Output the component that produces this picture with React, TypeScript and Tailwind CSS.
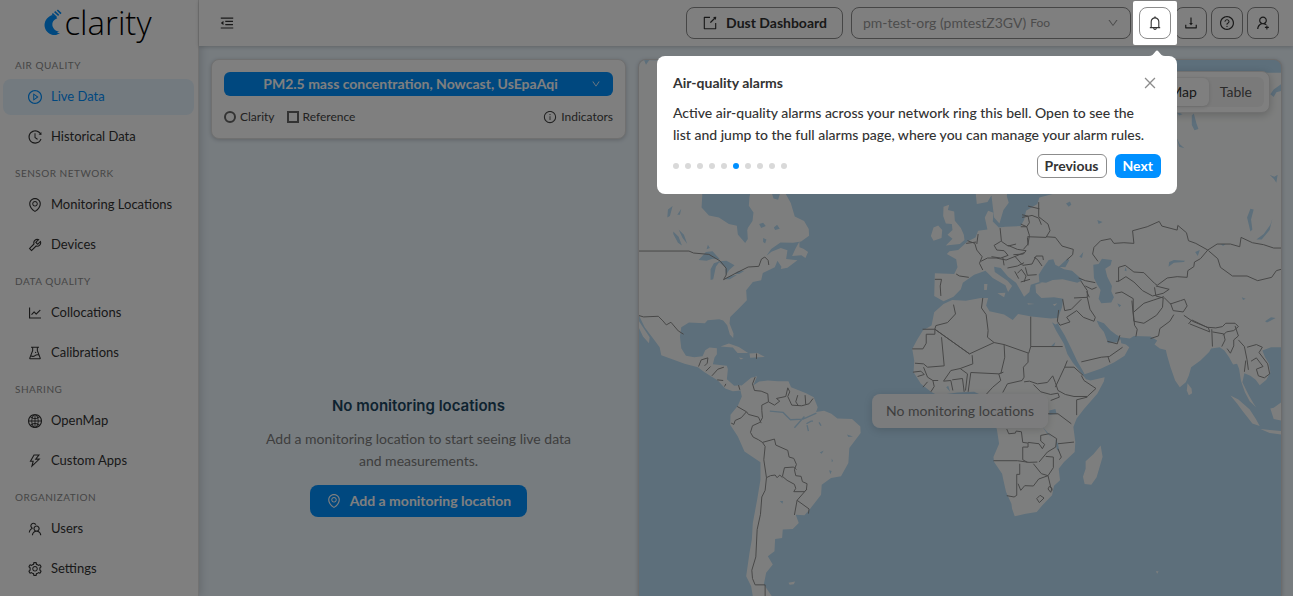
import type { ComponentType, ReactNode } from "react";
import {
  AiOutlineBell,
  AiOutlineClose,
  AiOutlineDown,
  AiOutlineDownload,
  AiOutlineEnvironment,
  AiOutlineExperiment,
  AiOutlineExport,
  AiOutlineGlobal,
  AiOutlineHistory,
  AiOutlineInfoCircle,
  AiOutlineLineChart,
  AiOutlineMenuFold,
  AiOutlinePlayCircle,
  AiOutlineQuestionCircle,
  AiOutlineSetting,
  AiOutlineTeam,
  AiOutlineThunderbolt,
  AiOutlineTool,
  AiOutlineUserAdd,
} from "react-icons/ai";
import { clsx } from "clsx";

interface NavItem {
  label: string;
  icon: ComponentType<{ className?: string }>;
  active?: boolean;
}

interface NavGroup {
  title: string;
  items: NavItem[];
}

const navGroups: NavGroup[] = [
  {
    title: "AIR QUALITY",
    items: [
      { label: "Live Data", icon: AiOutlinePlayCircle, active: true },
      { label: "Historical Data", icon: AiOutlineHistory },
    ],
  },
  {
    title: "SENSOR NETWORK",
    items: [
      { label: "Monitoring Locations", icon: AiOutlineEnvironment },
      { label: "Devices", icon: AiOutlineTool },
    ],
  },
  {
    title: "DATA QUALITY",
    items: [
      { label: "Collocations", icon: AiOutlineLineChart },
      { label: "Calibrations", icon: AiOutlineExperiment },
    ],
  },
  {
    title: "SHARING",
    items: [
      { label: "OpenMap", icon: AiOutlineGlobal },
      { label: "Custom Apps", icon: AiOutlineThunderbolt },
    ],
  },
  {
    title: "ORGANIZATION",
    items: [
      { label: "Users", icon: AiOutlineTeam },
      { label: "Settings", icon: AiOutlineSetting },
    ],
  },
];

const TOUR_STEPS = 10;
const TOUR_CURRENT = 5;

function Logo() {
  return (
    <a aria-label="clarity" className="flex h-[51px] items-start justify-center pr-0.5" href="#">
      <svg className="mt-2 h-7 w-[18px]" viewBox="25 26 54 84">
        <path
          d="M49 47C32 54 25 68 27 82c3 16 18 27 34 25l12-5-9-2 6-4c-10 1-18-8-20-18-1-9 4-17 15-21l-7-8z"
          fill="#0090ff"
        />
        <path d="M50 43l12 11M57 37l12 11M65 32l11 11" stroke="#0090ff" strokeWidth="5" />
      </svg>
      <span className="ml-0.5 font-['Open_Sans'] text-[33px] leading-[46px] font-light text-black">clarity</span>
    </a>
  );
}

function Sidebar() {
  return (
    <aside className="relative z-10 w-[199px] shrink-0 border-r border-[#e5e5e5] bg-white shadow-[2px_0_8px_rgba(0,0,0,0.15)]">
      <Logo />
      <nav>
        {navGroups.map((group) => (
          <section key={group.title}>
            <h2 className="flex h-7 items-center pl-[15px] text-[10px] tracking-wider text-[#8c8c8c]">
              {group.title}
            </h2>
            <ul>
              {group.items.map(({ label, icon: Icon, active }) => (
                <li className="mr-1 mb-1 ml-[3px]" key={label}>
                  <a
                    className={clsx(
                      "flex h-9 items-center gap-2 rounded-lg pl-6 text-[13px]",
                      active ? "bg-[#e6f4ff] text-[#0090ff]" : "text-[#333]",
                    )}
                    href="#"
                  >
                    <Icon className="h-4 w-4" />
                    {label}
                  </a>
                </li>
              ))}
            </ul>
          </section>
        ))}
      </nav>
    </aside>
  );
}

function IconButton({ label, children }: { label: string; children: ReactNode }) {
  return (
    <button
      aria-label={label}
      className="flex h-8 w-8 items-center justify-center rounded-lg border border-[#8c8c8c] bg-white text-base text-[#333]"
      type="button"
    >
      {children}
    </button>
  );
}

function AlarmTour() {
  return (
    <div
      aria-labelledby="tour-title"
      className="absolute top-[49px] -right-1.5 w-[520px] rounded-lg bg-white p-4 text-[#333]"
      role="dialog"
    >
      <svg className="absolute -top-1.5 right-3 h-1.5 w-4" viewBox="0 0 16 6">
        <path d="M0 6C3 6 4 4.500 6.500 1.500Q8-.5 9.500 1.500C12 4.500 13 6 16 6z" fill="#fff" />
      </svg>
      <div className="flex items-center justify-between">
        <h2 className="text-sm leading-[22px] font-bold" id="tour-title">
          Air-quality alarms
        </h2>
        <button aria-label="Close" className="flex h-[22px] w-[22px] items-center justify-center" type="button">
          <AiOutlineClose className="h-4 w-4 text-[#8c8c8c]" />
        </button>
      </div>
      <p className="mt-2 text-sm leading-[22px] font-medium">
        Active air-quality alarms across your network ring this bell. Open to see the
        <br />
        list and jump to the full alarms page, where you can manage your alarm rules.
      </p>
      <div className="mt-2 flex items-center justify-between">
        <div className="flex gap-1.5">
          {Array.from({ length: TOUR_STEPS }, (_, step) => (
            <span
              className={clsx("h-1.5 w-1.5 rounded-full", step === TOUR_CURRENT ? "bg-[#0090ff]" : "bg-[#d9d9d9]")}
              key={step}
            />
          ))}
        </div>
        <div className="flex gap-2 text-sm font-bold">
          <button className="h-6 rounded-md border border-[#8c8c8c] px-[7px] leading-[22px]" type="button">
            Previous
          </button>
          <button className="h-6 rounded-md bg-[#0090ff] px-2 leading-6 text-white" type="button">
            Next
          </button>
        </div>
      </div>
    </div>
  );
}

function Header() {
  return (
    <header className="flex h-[46px] items-center justify-between bg-white pr-[14px] pl-5 shadow-[0_1px_4px_rgba(0,0,0,0.2)]">
      <button aria-label="Collapse menu" className="text-[#333]" type="button">
        <AiOutlineMenuFold className="h-4 w-4" />
      </button>
      <div className="flex gap-2">
        <button
          className="flex h-8 items-center gap-2 rounded-lg border border-[#8c8c8c] px-[15px] text-sm font-bold text-[#333]"
          type="button"
        >
          <AiOutlineExport className="h-4 w-4" />
          Dust Dashboard
        </button>
        <label className="flex h-8 w-[280px] items-center rounded-lg border border-[#8c8c8c] px-[11px] text-[#999]">
          <select
            aria-label="Organization"
            className="appearance-none bg-transparent text-sm [field-sizing:content]"
            defaultValue="pm"
          >
            <option value="pm">pm-test-org (pmtestZ3GV)</option>
          </select>
          <span className="ml-1 text-xs">Foo</span>
          <AiOutlineDown className="ml-auto h-3 w-3" />
        </label>
        <div className="flex gap-1">
          <div className="relative z-30">
            <div className="pointer-events-none absolute -inset-1.5 rounded-xs bg-white shadow-[0_0_0_4000px_rgba(0,0,0,0.5)]" />
            <div className="relative">
              <IconButton label="Alarms">
                <AiOutlineBell />
              </IconButton>
            </div>
            <AlarmTour />
          </div>
          <IconButton label="Downloads">
            <AiOutlineDownload />
          </IconButton>
          <IconButton label="Help">
            <AiOutlineQuestionCircle />
          </IconButton>
          <IconButton label="Account">
            <AiOutlineUserAdd />
          </IconButton>
        </div>
      </div>
    </header>
  );
}

function FilterCard() {
  return (
    <div className="rounded-lg border border-[#e0e0e0] bg-white p-3 shadow-[0_1px_4px_rgba(0,0,0,0.2)]">
      <div className="grid items-center">
        <select
          aria-label="Measurement"
          className="col-start-1 row-start-1 h-6 w-full appearance-none rounded-md bg-[#0090ff] pr-7 pl-3 text-sm leading-6 font-bold text-white [text-align-last:center]"
          defaultValue="pm25"
        >
          <option value="pm25">PM2.5 mass concentration, Nowcast, UsEpaAqi</option>
        </select>
        <AiOutlineDown className="pointer-events-none col-start-1 row-start-1 mr-3 h-[10px] w-[10px] justify-self-end text-white" />
      </div>
      <div className="mt-3 flex items-center text-xs leading-[18px] text-[#444]">
        <span className="flex items-center gap-1">
          <span className="h-3 w-3 rounded-full border-2 border-[#666]" />
          Clarity
        </span>
        <span className="ml-3 flex items-center gap-1">
          <span className="h-3 w-3 border-2 border-[#666]" />
          Reference
        </span>
        <button className="ml-auto flex items-center gap-1" type="button">
          <AiOutlineInfoCircle className="h-[14px] w-[14px]" />
          Indicators
        </button>
      </div>
    </div>
  );
}

function EmptyState() {
  return (
    <div className="flex flex-col items-center px-12 pt-64 text-center">
      <h1 className="font-['Inter'] text-[15px] leading-[22px] font-semibold text-[#1d4661]">
        No monitoring locations
      </h1>
      <p className="mt-[11px] text-sm leading-[22px] text-[#7d7d7d]">
        Add a monitoring location to start seeing live data
        <br />
        and measurements.
      </p>
      <button
        className="mt-[13px] flex h-8 items-center gap-2 rounded-lg bg-[#0090ff] px-4 text-sm font-bold text-white"
        type="button"
      >
        <AiOutlineEnvironment className="h-4 w-4" />
        Add a monitoring location
      </button>
    </div>
  );
}

const landPaths = [
  // North and Central America
  "M3-393V375l17 35 30 40 15 20 5 24 70 26 40 10 20 15 40 25 22 24 23 8 23-2 3-16-22 2-22-20 3-30-3-10-42-5 5-20 7-10v-18l-22-2-13 8-8 18-25 3-25-4-14-23-4-35 4-28 23-14 48 2 8-9 35-3 12 4 12 14 8 28 10 10 1-13-12-30 2-20 26-25 24-25-2-30 20-25 25-5 5-22 36-17 8-20 12 18-2 7 20-4 30-22-34-4 4-26-20-7-28 11-15 12 14-20 28-20 38 1 24-4 24-17-1-20-14-24-28-14-12-40-22-40-10 10-6 20-14-4-10-34-52-20-10 50-2 26 14 20-3 26-16 24 2 30-8 12-22-26-3-26-24-5-30-20-30-6-22-24 2-34-5-405z",
  "M3 392l12 18 20 30-2 18-18-20-12-26z",
  // Newfoundland and the Caribbean
  "M485 152l-12 22-10 22 28-2 12 8 8-18-14-10-12-4z",
  "M248 468l25-9 30 10 28 18-32 0-14-16z",
  "M335 489l24-2 22 12-44 3zM303 501l14 2-8 4z",
  // South America
  "M308 600v-12l32-26 18-5-12 28 18-12 26-3 30 2 32 0 8 18 45 18 23 12 12 30-5 15 24-4 22 9 18 14 44 2 25 22 1 20-34 45-3 45-22 40-30 5-28 20-2 30-35 45-15 17-26-2 9 25-18 18-30 2-2 25-21 3-2 37-20 15 15 25-20 25-7 35 24 35h-57l-5-30-15-30 10-70 7-40 3-50 13-70 10-60v-52l-48-33-20-45-23-35 1-30 22-27 12-28z",
  // Britain, Ireland, Scandinavia
  "M918 48l17-6-4 16 19 4 2 28 18 22 9 20 2 16-14 12-42 4 20-20-15-12 15-14-2-18-18-2-8-22z",
  "M902 104l12 14-2 24-24 8-8-14 8-26z",
  "M1012-20l6 60 32-6 12-20 8 66 16 18 12-40 16-22-6-20 12-76z",
  // Eurasia and Africa
  "M1250-355H1932V470L1902 470 1876 480 1884 500 1896 520 1900 545 1888 568 1868 584 1856 568 1840 556 1822 548 1816 575 1828 600 1836 616 1850 640 1857 650 1838 632 1824 606 1812 572 1806 535 1800 520 1788 522 1776 500 1762 480 1748 470 1722 474 1716 484 1690 510 1662 530 1655 555 1646 575 1628 590 1614 570 1600 530 1590 496 1586 478 1568 474 1552 462 1560 450 1540 438 1490 436 1478 444 1450 440 1436 432 1420 420 1400 398 1378 390 1386 408 1400 424 1408 446 1412 458 1440 455 1450 446 1452 458 1466 462 1476 470 1462 496 1430 516 1390 535 1342 551 1336 540 1320 512 1300 470 1282 434 1266 408 1262 398 1254 402 1244 395 1256 420 1280 460 1290 490 1306 516 1330 545 1346 566 1360 570 1402 560 1400 572 1380 610 1340 656 1318 684 1308 710 1314 755 1312 785 1280 815 1264 835 1268 870 1250 886 1244 915 1215 945 1198 965 1165 970 1132 978 1124 955 1122 940 1106 905 1098 870 1094 850 1070 815 1068 800 1085 760 1078 715 1062 690 1045 650 1046 620 1010 604 960 606 900 614 880 604 850 580 828 545 830 510 824 475 840 445 856 420 882 405 890 365 918 340 944 328 985 330 1030 322 1052 322 1046 345 1056 362 1100 372 1126 388 1142 370 1182 378 1240 384 1262 382 1274 350 1278 324 1250 320 1212 322 1196 306 1194 282 1214 276 1206 274 1180 282 1176 304 1160 318 1150 300 1136 276 1112 258 1090 232 1070 228 1072 244 1110 270 1124 286 1112 304 1104 284 1066 262 1044 240 1010 252 976 276 970 296 948 318 918 332 890 316 892 248 950 250 960 230 956 206 928 190 936 182 962 178 990 152 1014 140 1022 120 1050 116 1042 80 1052 60 1068 66 1066 92 1084 110 1104 108 1150 106 1160 88 1166 60 1200 40 1206 20 1246 10z",
  // Sicily, Sardinia, Crete, Cyprus
  "M1080 308l24-2-4 14zM1040 280l10 0-2 18-8 0zM1170 338l22 2-20 2zM1246 342l14-4-8 8z",
  // Islands of the Indian Ocean
  "M1390 765l6 34-18 62-16 22-20-2-5-22 8-24 0-22 24-22z",
  "M1651 578l12 16 2 14-10 6-6-14z",
  "M1780 615l24 12 34 30 18 28 12 22-22-8-30-38-16-22zM1870 716l22 2 40 4v10l-34-4z",
  "M1932 636l-22 16-10 2 10 32 22 4z",
  "M452 1178l20-4-4 8-12 2zM1556 1143l8 0-4 8z",
];

const waterPaths = [
  // Great Lakes and Canadian lakes
  "M182 208l22-24 20-2 22 24-22-2-18 6zM218 268l0-32 10-18 18-6-12 16-8 38zM240 212l26-2 24 14-16 14-10 16-2-24zM258 266l18-10 22-4-22 14zM288 250l12-8 20-2-16 10z",
  "M88 80l2-24 14-10-8 30zM118 72l12-18-4 18zM106 122l16 16 10 26-12-8-14-26zM122 116l16 16 10 28-14-18zM206 176l4-14 6 10zM364 100l12-4 8 10-14 6zM376 142l10 4-4 12-6-4zM408 110l10-8 8 12-14 4zM318 112l14 2-10 6z",
  // Black Sea, Caspian Sea, Aral Sea
  "M1206 274l-2-22 14-22 16-22 14-2 6 16 26 14 24 4 32 28-16 8-44-10-30 2-20 8zM1264 228l26-24 6 4-12 22z",
  "M1368 222l16-2 10-16 30 4-4 16-16 10 6 24 14 28-2 16 8 18-8 16-30 2-8-14 6-26-10-16-10-20z",
  "M1594 228l2-14 14-6 34 2-4 4-30 2zM1466 228l2 14-6-2z",
  "M1858 146l22-16 20-28 6-18-8 34-24 28zM1830 80l10-26 10 2-8 30 4 30-6 6zM1380 88l16 6-12 6zM1286 38l12-6 4 10-8 6zM1440 338l12 6-6 6zM1674 184l14-6-6 18zM1750 160l16 0-8 6zM1884 392l18-12 14 2-26 14zM1814 320l12 4-8 4zM1326 198l12-14-4 18z",
  // African lakes
  "M1236 660l18-4 4 14-22 4zM1216 710l20 22 8 10-16-14zM1254 746l8 14 4 26-8-10zM926 590l6-4 6 18zM1240 468l14-14-4 14z",
  // Northern Siberia and the Arctic inlets
  "M1668-342l12-30 8 2-4 26 4 12-10-4zM1616-240l20 10-10 4zM1618-160l10 20 14 12-16-4zM1664-226l6-6 8 30 6 16-12 4-8-16zM1900-290l10-14 22-16 0 20-14 4-8 14zM1898-48l14 6 10-6-4 24-8-12zM18-393l6 14 10-14z",
  // Brazilian reservoirs
  "M546 786l12-6-6 10zM574 840l8 2-4 10zM582 804l4 8-4 4zM426 932l10 0-2 8zM628 732l18 6-14 2z",
];

// Long thin rivers: the Amazon and its mouth
const riverPath = "M396 662l40 4 22 22 38-2 40-18M500 678l-30 34M506 700l14-8 6 0M508 704l4 18M544 696l6 10";

const borderPath = [
  "M3 181H153l14 6 46 4 34 20 18 22 0 20-8 14 34-18 40-20 32-2 8-22 10-6 10 10 2 14",
  "M3 375l14 4 44-2 14 14 10 12 14-8 22 26 16 10",
  "M182 528l8-20 20-6-2 16-8 8M204 542l14-14M222 556l18-20 18-6M238 568l18 2M260 588l4-8M302 584l4 14M356 489v16",
  // South America
  "M352 560L344 580 350 600 370 602 390 610 392 634 372 644 372 660 374 682 366 696 344 706 338 726 346 740 362 748 374 756 410 746 414 764 450 780 454 800 468 804 476 822 470 838 474 856 490 858 494 874 508 880 506 898 478 930",
  "M392 634L410 644 426 632 416 624 444 618 450 592 456 604 450 618 462 644 492 646 514 640 526 624M480 614L474 634 482 646M502 614L504 642M298 648L326 664 332 672 362 680 370 698M326 664L310 682 292 690 288 702 280 698",
  "M374 756L382 768 378 808 386 862 382 900 372 920 368 972 358 1018 354 1100 342 1140 344 1165 352 1184H382V1220M386 862L398 856 412 854 418 862 426 854 434 862M434 858L440 832 468 830 476 838M434 858L448 870 470 882 474 894 468 904 500 904 508 896M478 930L514 956 512 970M478 930L470 974",
  // Western and central Europe
  "M892 266h20l-4 20 2 30M956 250l10 6 28 4M990 150l22 8 6 20 16 20-8 20 10 20M986 158l30-4M1022 130l-4 30M1088 112l4 40 20 14 24-6M1090 152l-20 12 8 14 22 2 12 14-22 8-28-4M1150 108l18 0 8 26-4 26-14 16M1030 212l20-10 26 0 30 6 30-12 24-10M1112 164l28 12 26 4-8 10-30 2M1096 200l4 24M1132 196l24 28 28-4 12-24 20 0 2 12M1110 232l30-6 20-10M1132 242l12 22M1140 248l12-12 14 20-6 18M1150 274l28-8M1164 230l6 24 28-2M1190 200l10 6 14 20",
  "M1150 100l18 8 8-12-4-20-18-4M1154 80l30-6 20 8 8 20M1204 34l0 44 28 22 6 20-12 20-56-2M1206 54l-34-8M1226 138l28 2 20 26 34 10-2 16-18 16M1170 140l2 24",
  // Turkey, Levant, Arabia, Iran
  "M1310 322l40-2 0-20-20-30M1324 262l20 8 30 6M1344 286l20 10 14-6M1276 326l6 34 20-4 30-30M1350 320l8 36 16 24-4 12-32-12-20-20-30 20 10 14-30 10-8-12 4-34M1356 320l-8-18",
  "M1332 514l60-14 24-2 40-28M1412 498l6 18M1410 452l30 8 8-26M1434 308l20-4 34 20 0 40 4 40 8 12-4 22M1490 364l30-26 30-10 30-10",
  // Central Asia
  "M1382 212L1366 190 1370 170 1390 150 1420 144 1430 158 1460 156 1490 158 1486 120 1530 108 1566 92 1574 106 1620 118 1622 104 1648 126 1654 150 1676 158 1712 178 1740 160 1780 160 1808 168 1812 140 1846 156 1880 162 1910 172 1932 172",
  "M1712 178L1690 204 1672 214 1670 228 1652 240 1650 260 1620 258 1590 262 1560 284 1552 278 1520 246 1490 244 1464 224 1444 230V272L1466 258 1490 274 1516 300 1546 316 1578 308 1596 296 1556 286M1714 180L1742 204 1750 230 1786 256H1830L1862 270 1904 260 1918 240 1932 236M1436 272L1444 272M1552 290L1556 316 1578 322 1576 350 1558 374 1520 398 1490 392 1484 330",
  "M1580 320l20 20 30-10 12-4 8 20-12 18-30-4-8-22M1610 372l-12 20-30 22-4 22-24 8M1640 374l26 18 44 18 26 2 20-4 10-10 28 0 10 10-14 12-22 4-10 10M1654 400l10-12 50 24 4 12-60-24M1724 416l2 52M1726 424l34 6 4 18-10 20M1794 406l10 30-14 12 0 18-10 22-10-14M1804 448l18 20 8 40 4 30M1830 470l28-8 18 8-10 16 26 34 6 30-16 12-18-6-6-20 20-8-20-26-16 10M1826 510l-4 34",
  // North and west Africa
  "M948 342L954 370 930 396 895 405 892 416M855 416H892V431H866V458L856 475H824M892 416L996 490 1070 456M912 440L920 526 870 530 858 520 832 518M892 416L996 490M1036 322L1032 352 1046 372 1052 420 1050 440 1070 456 1100 462 1174 488 1180 468V378M1180 468H1276M1100 462L1102 500 1090 550M1004 494L1006 520 968 534 940 540 918 572",
  "M826 545L850 542 860 552 840 558M858 530L870 560 886 570 902 570M918 572L940 570 946 600M944 568L975 564 980 604M968 534L990 550 984 600M1000 546L1084 550 1098 545M1000 546L992 604M870 574L856 590M880 604L890 588 886 570M1172 488V515L1158 530 1160 560 1154 570 1110 580 1096 606M1084 550L1090 570 1066 590 1046 612M1160 574L1176 572 1200 580 1230 576 1246 556 1254 576 1262 600M1254 590L1268 560 1282 530 1290 510M1282 530L1310 530 1338 555M1332 555L1340 570 1376 594 1350 618 1310 618 1284 612 1262 600M1188 582L1210 604 1240 612 1262 608",
  // East and southern Africa
  "M1350 620L1318 628V674M1232 670H1262L1302 700M1262 608L1266 620 1240 630M1108 716L1114 730 1134 728 1136 722 1152 724 1156 756 1172 758V770L1156 770V808L1170 816M1172 756L1205 760 1215 775 1222 762 1210 752V735L1235 730 1258 745 1255 770 1230 785 1205 815M1310 755L1262 760M1262 775L1272 800 1266 808",
  "M1068 811H1140L1175 816 1200 815M1188 820L1212 850 1232 856 1248 832V800L1225 798M1147 820V852H1138V915L1130 920 1108 916M1142 880L1150 900 1162 886 1188 887 1204 866 1232 856 1240 890 1245 900M1232 896l4-8 8 6-4 12zM1198 925l10-10 12 8-14 14z",
].join("");

function WorldMap() {
  return (
    <svg
      aria-hidden="true"
      className="absolute inset-0 h-full w-full"
      preserveAspectRatio="xMinYMin slice"
      viewBox="3 -393 1929 1611"
    >
      <g fill="#fbfdfc">
        {landPaths.map((d) => (
          <path d={d} key={d} />
        ))}
      </g>
      <g fill="#badef6">
        {waterPaths.map((d) => (
          <path d={d} key={d} />
        ))}
      </g>
      <path d={riverPath} fill="none" stroke="#badef6" strokeWidth="4" />
      <path d={borderPath} fill="none" stroke="#909090" strokeLinejoin="round" strokeWidth="3" />
    </svg>
  );
}

function MapPanel() {
  return (
    <section className="relative min-w-0 flex-1 overflow-hidden rounded-t-lg border border-b-0 border-[#d9d9d9] bg-[#badef6] shadow-[0_1px_4px_rgba(0,0,0,0.2)]">
      <WorldMap />
      <div className="absolute top-[11px] right-[11px] rounded-lg border border-[#e0e0e0] bg-white p-[5px] shadow-[0_2px_8px_rgba(0,0,0,0.2)]">
        <div className="flex rounded-md bg-[#f5f5f5] p-px text-sm leading-7 text-[#555]">
          <button className="rounded-md bg-white px-3 text-[#333] shadow-[0_1px_4px_rgba(0,0,0,0.15)]" type="button">
            Map
          </button>
          <button className="px-[11px]" type="button">
            Table
          </button>
        </div>
      </div>
      <p className="absolute top-[334px] left-1/2 -translate-x-1/2 rounded-lg bg-[#f9f9fb]/95 px-[14px] text-sm leading-[34px] whitespace-nowrap text-[#7d7d7d] shadow-[0_2px_8px_rgba(0,0,0,0.15)]">
        No monitoring locations
      </p>
    </section>
  );
}

export default function App() {
  return (
    <div className="flex h-screen overflow-hidden bg-[#eef8ff] font-['Lato',sans-serif]">
      <Sidebar />
      <div className="flex min-w-0 flex-1 flex-col">
        {/* the tour mask is cast from the bell, so the header has to sit over the sidebar and the content */}
        <div className="relative z-20">
          <Header />
        </div>
        <main className="flex min-h-0 flex-1 gap-3 pt-[13px] pr-[11px] pl-3">
          <section className="w-[415px] shrink-0">
            <FilterCard />
            <EmptyState />
          </section>
          <MapPanel />
        </main>
      </div>
    </div>
  );
}
